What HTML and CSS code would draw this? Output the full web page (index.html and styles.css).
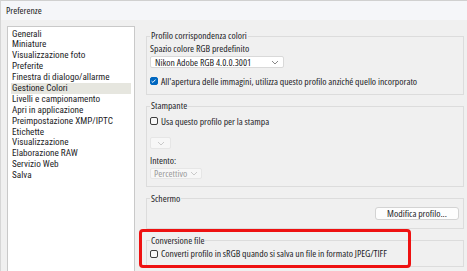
FILE: index.html
```html
<!DOCTYPE html>
<html lang="it">
<head>
<meta charset="utf-8">
<title>Preferenze</title>
<link rel="stylesheet" href="styles.css">
</head>
<body>
<div class="window">
  <div class="titlebar">Preferenze</div>
  <div class="main">
    <ul class="nav">
      <li>Generali</li>
      <li>Miniature</li>
      <li>Visualizzazione foto</li>
      <li>Preferite</li>
      <li>Finestra di dialogo/allarme</li>
      <li class="selected">Gestione Colori</li>
      <li>Livelli e campionamento</li>
      <li>Apri in applicazione</li>
      <li>Preimpostazione XMP/IPTC</li>
      <li>Etichette</li>
      <li>Visualizzazione</li>
      <li>Elaborazione RAW</li>
      <li>Servizio Web</li>
      <li>Salva</li>
    </ul>
    <div class="pane">
      <fieldset class="group g1">
        <legend>Profilo corrispondenza colori</legend>
        <div class="label l-space">Spazio colore RGB predefinito</div>
        <div class="select s-main"><span>Nikon Adobe RGB 4.0.0.3001</span><svg class="chev" viewBox="0 0 8 5" width="8" height="5"><path d="M1 1 L4 4 L7 1" fill="none" stroke="#7a7a7a" stroke-width="0.9"/></svg></div>
        <div class="check-row r-open"><span class="box checked"><svg viewBox="0 0 8 8" width="8" height="8"><path d="M1.8 4.2 L3.3 5.6 L6.3 2.4" fill="none" stroke="#fff" stroke-width="1.1"/></svg></span><span>All'apertura delle immagini, utilizza questo profilo anziché quello incorporato</span></div>
      </fieldset>
      <fieldset class="group g2">
        <legend>Stampante</legend>
        <div class="check-row r-print"><span class="box"></span><span>Usa questo profilo per la stampa</span></div>
        <div class="select disabled s-small"><span></span><svg class="chev" viewBox="0 0 8 5" width="8" height="5"><path d="M1 1 L4 4 L7 1" fill="none" stroke="#c4c4c4" stroke-width="0.9"/></svg></div>
        <div class="label l-intent">Intento:</div>
        <div class="select disabled s-intent"><span>Percettivo</span><svg class="chev" viewBox="0 0 8 5" width="8" height="5"><path d="M1 1 L4 4 L7 1" fill="none" stroke="#c4c4c4" stroke-width="0.9"/></svg></div>
      </fieldset>
      <fieldset class="group g3">
        <legend>Schermo</legend>
        <div class="btn-row"><button class="btn">Modifica profilo...</button></div>
      </fieldset>
      <fieldset class="group g4">
        <legend>Conversione file</legend>
        <div class="check-row r-conv"><span class="box"></span><span>Converti profilo in sRGB quando si salva un file in formato JPEG/TIFF</span></div>
      </fieldset>
      <div class="highlight"></div>
    </div>
  </div>
</div>
</body>
</html>
```
FILE: styles.css
```css
* { box-sizing: border-box; }
html, body { margin: 0; padding: 0; }
body {
  width: 467px;
  height: 271px;
  overflow: hidden;
  background: #f0f0f0;
  font-family: "Open Sans", Roboto, sans-serif;
  font-stretch: 87.5%;
  font-size: 9.7px;
  color: #1c1c26;
}
.window {
  height: 271px;
  border-left: 1px solid #d6d6d6;
  border-top: 1px solid #d0d0d0;
  display: flex;
  flex-direction: column;
}
.titlebar {
  height: 19px;
  flex: none;
  background: #f5f6f9;
  padding-left: 5px;
  line-height: 19px;
  color: #1a1a1a;
}
.main {
  flex: 1;
  display: flex;
  padding: 6px 3px 0 6px;
  gap: 11px;
  min-height: 0;
}
.nav {
  list-style: none;
  margin: 0;
  padding: 1.5px 3px 0 3px;
  width: 128px;
  background: #fff;
  border: 1px solid #c9c9c9;
  border-bottom: none;
  flex: none;
  font-family: Roboto, "Open Sans", sans-serif;
  font-stretch: condensed;
  font-size: 9.2px;
}
.nav li {
  height: 10.9px;
  line-height: 10.9px;
  padding-left: 1px;
  white-space: nowrap;
}
.nav li.selected { background: #e6e6df; }
.pane {
  position: relative;
  width: 318px;
  flex: none;
  display: flex;
  flex-direction: column;
  min-height: 0;
}
.group {
  margin: 0;
  border: 1px solid #dcdcdc;
  padding: 0 3px 0 3px;
  min-width: 0;
  flex: none;
}
.group legend {
  padding: 0 1px;
  line-height: 12px;
  height: 12px;
}
.g1 { margin-top: 4px; padding-bottom: 7px; }
.g2 { margin-top: 5px; padding-bottom: 7px; }
.g3 { margin-top: 5.5px; padding-bottom: 8px; }
.g4 { margin-top: 6px; padding-bottom: 6px; }
.label { line-height: 12px; height: 12px; }
.l-space { margin-top: 1px; }
.l-intent { margin-top: 6px; }
.select {
  display: flex;
  align-items: center;
  justify-content: space-between;
  background: #fff;
  border: 1px solid #d9d9d9;
  border-radius: 2px;
  padding: 0 4px 0 4px;
  height: 12px;
  white-space: nowrap;
}
.select .chev { flex: none; }
.s-main { width: 134px; margin-top: 1px; }
.select.disabled { background: #f7f7f7; border-color: #e6e6e6; color: #9a9a9a; }
.s-small { width: 21px; height: 12px; margin-top: 10px; padding-right: 5px; }
.s-intent { width: 52px; height: 11px; margin-top: 1px; padding-left: 3px; padding-right: 3px; }
.check-row {
  display: flex;
  align-items: center;
  gap: 3px;
  height: 12px;
  white-space: nowrap;
}
.r-open { margin-top: 7px; }
.r-print { margin-top: 3px; }
.r-conv { margin-top: 1px; }
.box {
  width: 8px;
  height: 8px;
  border: 1px solid #3c3c3c;
  border-radius: 2px;
  background: #f7f7f7;
  flex: none;
  display: flex;
}
.box.checked { background: #0067c0; border-color: #0067c0; }
.box.checked svg { margin: -1px 0 0 -1px; }
.btn-row { display: flex; justify-content: flex-end; padding-right: 1px; margin-top: 2px; }
.btn {
  font: inherit;
  color: #1c1c26;
  width: 84px;
  height: 13px;
  padding: 0;
  background: #fdfdfd;
  border: 1px solid #d3d3d3;
  border-radius: 3px;
  line-height: 11px;
}
.highlight {
  position: absolute;
  left: -7px;
  top: 203px;
  width: 272px;
  height: 39px;
  border: 3px solid #ee1111;
  border-radius: 4px;
  pointer-events: none;
}
```
